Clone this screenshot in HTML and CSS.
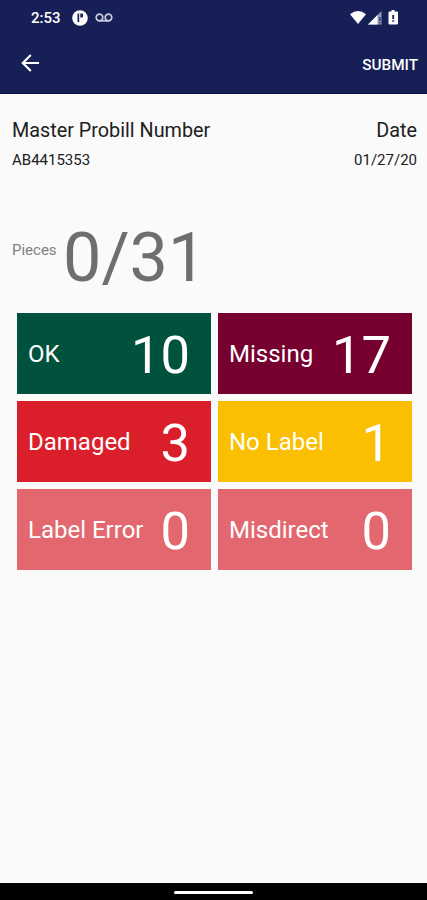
FILE: index.html
```html
<!DOCTYPE html>
<html lang="en">
<head>
<meta charset="utf-8">
<meta name="viewport" content="width=device-width, initial-scale=1">
<title>Master Probill</title>
<link rel="stylesheet" href="styles.css">
</head>
<body>
<header class="top">
  <div class="status">
    <span class="clock">2:53</span>
    <svg class="app-icon" width="16" height="16" viewBox="0 0 16 16"><circle cx="8" cy="8" r="7.8" fill="#fff"/><path d="M5.500 3.500h1.700V12H5.500zM8.300 3.500H10a1 1 0 0 1 1 1V6.500a1 1 0 0 1-1 1H8.300z" fill="#172056"/></svg>
    <svg class="voicemail" width="18" height="10" viewBox="0 0 18 10" fill="none" stroke="#c9cce0" stroke-width="1.700"><circle cx="4.500" cy="4.500" r="3.300"/><circle cx="13.500" cy="4.500" r="3.300"/><path d="M4.500 7.800h9"/></svg>
    <svg class="signals" width="50" height="16" viewBox="0 0 50 16"><path d="M0 4.200Q8-2.200 16 4.200L8 14z" fill="#fff"/><path d="M31.500 1v13.500H18z" fill="#9298b8"/><path d="M27.500 5v9.500H18z" fill="#fff"/><path d="M29.300 7h1.100v4h-1.100zM29.300 12h1.100v1.300h-1.100z" fill="#172056"/><path d="M41.500 0h3v1.500H47a1 1 0 0 1 1 1v11a1 1 0 0 1-1 1h-7.500a1 1 0 0 1-1-1v-11a1 1 0 0 1 1-1h2z" fill="#fff"/><path d="M42.300 5h1.800v4h-1.800zM42.300 10.200h1.800v1.600h-1.800z" fill="#172056"/></svg>
  </div>
  <div class="bar">
    <svg width="18" height="18" viewBox="0 0 18 18" fill="none" stroke="#fff" stroke-width="2.200"><path d="M18 9H2M9.800 1 1.800 9l8 8"/></svg>
    <span class="submit">SUBMIT</span>
  </div>
</header>
<main>
  <section class="info">
    <div><h1>Master Probill Number</h1><p>AB4415353</p></div>
    <div class="date"><h1>Date</h1><p>01/27/20</p></div>
  </section>
  <section class="pieces"><span class="label">Pieces</span><span class="total">0/31</span></section>
  <section class="grid">
    <div class="tile ok"><span>OK</span><b>10</b></div>
    <div class="tile missing"><span>Missing</span><b>17</b></div>
    <div class="tile damaged"><span>Damaged</span><b>3</b></div>
    <div class="tile nolabel"><span>No Label</span><b>1</b></div>
    <div class="tile rose"><span>Label Error</span><b>0</b></div>
    <div class="tile rose"><span>Misdirect</span><b>0</b></div>
  </section>
</main>
<footer class="nav"><i></i></footer>
</body>
</html>
```
FILE: styles.css
```css
* { box-sizing: border-box; }
body {
  margin: 0;
  height: 900px;
  display: flex;
  flex-direction: column;
  overflow: hidden;
  background: #fafafa;
  color: #202020;
  font-family: Roboto, sans-serif;
}
h1, p { margin: 0; font-weight: 400; }
svg { display: block; flex: none; }
.top { height: 94px; background: #172056; color: #fff; border-bottom: 1px solid #0a104a; }
.status { height: 36px; display: flex; align-items: center; padding: 0 27px 0 31px; }
.clock { width: 41px; font-size: 15px; font-weight: 500; }
.voicemail { margin-left: 7px; }
.signals { margin-left: auto; }
.bar { height: 54px; display: flex; align-items: center; justify-content: space-between; padding: 0 9px 0 21px; }
.submit { font-size: 15.3px; font-weight: 500; padding-top: 3px; }
main { flex: 1; }
.info { display: flex; justify-content: space-between; padding: 25px 10px 0 12px; }
.info h1 { font-size: 19.8px; line-height: 24px; }
.info p { font-size: 15px; line-height: 20px; margin-top: 7px; }
.date { text-align: right; }
.pieces { display: flex; height: 80px; margin-top: 48px; padding-left: 12px; color: #6e6e6e; }
.label { width: 51px; font-size: 15px; line-height: 20px; padding-top: 22px; color: #808080; }
.total { font-size: 68.3px; line-height: 80px; }
.grid { display: grid; grid-template-columns: 194px 194px; grid-auto-rows: 81px; gap: 7px; margin: 15px 0 0 17px; }
.tile { display: flex; align-items: center; justify-content: space-between; padding: 0 21px 0 11px; color: #fff; }
.tile span { font-size: 24px; white-space: nowrap; }
.tile b { font-size: 52.5px; font-weight: 400; line-height: 60px; padding-top: 2px; }
.ok { background: #00513e; }
.missing { background: #76002f; }
.damaged { background: #db1f2a; }
.nolabel { background: #fabf00; }
.rose { background: #e3676f; }
.nav { height: 17px; background: #000; display: flex; justify-content: center; padding-top: 8px; }
.nav i { width: 79px; height: 3px; border-radius: 2px; background: #fff; }
```
